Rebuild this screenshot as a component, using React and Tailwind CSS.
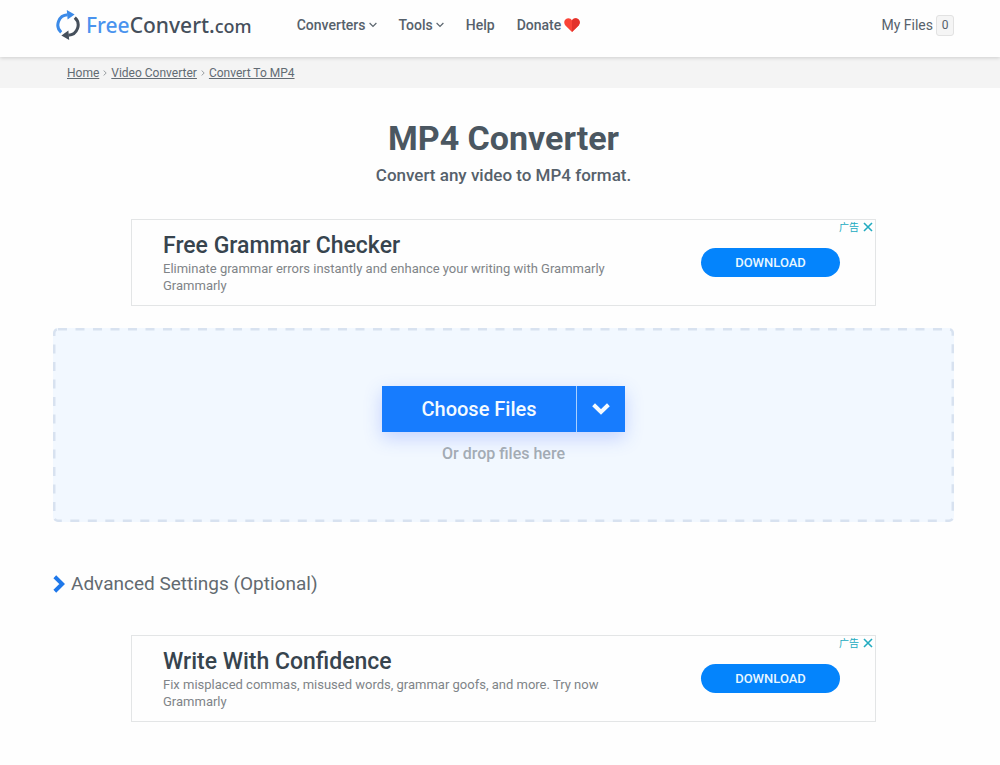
import React from "react";

function LogoMark() {
  return (
    <svg viewBox="0 0 24 30" className="h-[30px] w-6" fill="none" aria-hidden="true">
      <path d="M5.2 22.4A10.2 10.2 0 0 1 11.6 4.7" stroke="#3b8ae8" strokeWidth="3" />
      <path d="M10.8 0L18.6 4.6L11.6 9.6Z" fill="#3b8ae8" />
      <path d="M18.8 7.6A10.2 10.2 0 0 1 12.4 25.3" stroke="#454f5b" strokeWidth="3" />
      <path d="M13.2 30L5.4 25.4L12.4 20.4Z" fill="#454f5b" />
    </svg>
  );
}

function SmallChevron() {
  return (
    <svg viewBox="0 0 8 6" className="h-[6px] w-2" fill="none" stroke="#5b656e" strokeWidth="1.2" aria-hidden="true">
      <path d="M0.6 1L4 4.4L7.4 1" />
    </svg>
  );
}

function Heart() {
  return (
    <svg viewBox="0 0 16 14" className="h-[14px] w-4" aria-hidden="true">
      <path d="M8 14L1.4 7.6C-0.4 5.6 0 2.4 2 1C4 -0.4 6.8 0.2 8 2.6C9.2 0.2 12 -0.4 14 1C16 2.4 16.4 5.6 14.6 7.6Z" fill="#fa4438" />
      <path d="M8 14L8 2.6C9.2 0.2 12 -0.4 14 1C16 2.4 16.4 5.6 14.6 7.6Z" fill="#e3322b" />
    </svg>
  );
}

function Ad({ title, text }) {
  return (
    <aside className="relative mx-auto flex min-h-[87px] w-full max-w-[745px] items-center justify-between border border-[#e3e5e6] pr-[35px] pl-[31px]">
      <div>
        <h2 className="text-[23px] leading-[28px] font-medium text-[#37444e]">{title}</h2>
        <p className="text-[13px] leading-[17px] text-[#808488]">{text}</p>
        <p className="text-[13px] leading-[17px] text-[#808488]">Grammarly</p>
      </div>
      <button type="button" className="h-[29px] w-[139px] rounded-full bg-[#0484fc] text-[13px] font-medium text-[#e8f7ff]">
        DOWNLOAD
      </button>
      <div className="absolute top-[1px] right-[2px] flex items-center gap-1 text-[#22abc0]">
        <span className="font-['Noto_Sans_CJK_SC',sans-serif] text-[10px] leading-[12px]">广告</span>
        <button type="button" aria-label="Close ad">
          <svg viewBox="0 0 10 10" className="size-[10px]" fill="none" stroke="currentColor" strokeWidth="1.6" aria-hidden="true">
            <path d="M1 1L9 9M9 1L1 9" />
          </svg>
        </button>
      </div>
    </aside>
  );
}

function CrumbChevron() {
  return (
    <svg viewBox="0 0 4 6" className="h-[6px] w-1" fill="none" stroke="#9a9fa3" aria-hidden="true">
      <path d="M0.6 0.5L3.2 3L0.6 5.5" />
    </svg>
  );
}

export default function App() {
  return (
    <div className="min-h-screen bg-[#fefefe] font-[Roboto,sans-serif] text-[#56616b]">
      <header className="relative flex h-[57px] items-center bg-[#fefefe] pr-[46px] pb-[7px] pl-[56px] shadow-[0_1px_4px_rgba(0,0,0,0.16)]">
        <a href="#" className="flex items-center gap-[6px] font-['Noto_Sans',sans-serif] leading-[30px]">
          <LogoMark />
          <span className="text-[21px] font-medium text-[#454f5b]">
            <span className="text-[#4a93ee]">Free</span>Convert.<span className="text-[18px]">com</span>
          </span>
        </a>
        <nav className="ml-[45px] flex flex-1 items-center gap-[22px] text-[14px] font-medium">
          <button type="button" className="flex items-center gap-[3px]">Converters <SmallChevron /></button>
          <button type="button" className="flex items-center gap-[3px]">Tools <SmallChevron /></button>
          <a href="#">Help</a>
          <a href="#" className="flex items-center gap-[3px]">Donate <Heart /></a>
        </nav>
        <a href="#" className="flex items-center gap-[3px] text-[14px]">
          My Files
          <span className="flex h-[21px] w-[18px] items-center justify-center rounded-[3px] border border-[#e2e2e2] bg-[#f5f5f5] text-[12px]">0</span>
        </a>
      </header>

      <nav aria-label="Breadcrumb" className="flex h-[31px] items-center gap-[4px] bg-[#f4f4f4] pl-[67px] text-[12px] text-[#626b73]">
        <a href="#" className="underline">Home</a>
        <CrumbChevron />
        <a href="#" className="underline">Video Converter</a>
        <CrumbChevron />
        <a href="#" className="underline">Convert To MP4</a>
      </nav>

      <main className="pt-[29px] pr-[46px] pb-[42px] pl-[53px]">
        <h1 className="text-center text-[34px] leading-[42px] font-bold text-[#4b5761]">MP4 Converter</h1>
        <p className="mt-[6px] mb-[33px] text-center text-[17px] leading-[21px] font-medium text-[#56616b]">
          Convert any video to MP4 format.
        </p>

        <Ad title="Free Grammar Checker" text="Eliminate grammar errors instantly and enhance your writing with Grammarly" />

        <section className="relative mt-[22px] flex min-h-[194px] flex-col items-center rounded-[5px] bg-[#f2f8ff] pt-[58px]">
          <svg className="pointer-events-none absolute inset-0 size-full overflow-hidden rounded-[5px]" aria-hidden="true">
            <rect width="100%" height="100%" rx="5" fill="none" stroke="#d8e2f0" strokeWidth="5" strokeDasharray="9 8.5" />
          </svg>
          <div className="flex h-[46px] bg-[#177cfe] text-[#f4faff] shadow-[0_6px_18px_rgba(60,100,255,0.25)]">
            <button type="button" className="w-[194px] text-[20px] font-medium">Choose Files</button>
            <button type="button" aria-label="More sources" className="flex w-[49px] items-center justify-center border-l border-[#a9d0ff]">
              <svg viewBox="0 0 18 12" className="h-3 w-[18px]" fill="none" stroke="currentColor" strokeWidth="4" aria-hidden="true">
                <path d="M1.6 1.8L9 9L16.4 1.8" />
              </svg>
            </button>
          </div>
          <p className="mt-3 text-[16px] leading-[20px] font-medium text-[#a3abb4]">Or drop files here</p>
        </section>

        <button type="button" className="mt-[48px] mb-[38px] flex items-center gap-[6px] text-[19px] leading-[27px] text-[#626a70]">
          <svg viewBox="0 0 12 18" className="h-[18px] w-3" fill="none" stroke="#1f78ea" strokeWidth="4" aria-hidden="true">
            <path d="M1.8 1.8L9.2 9L1.8 16.2" />
          </svg>
          Advanced Settings (Optional)
        </button>

        <Ad title="Write With Confidence" text="Fix misplaced commas, misused words, grammar goofs, and more. Try now" />
      </main>
    </div>
  );
}
